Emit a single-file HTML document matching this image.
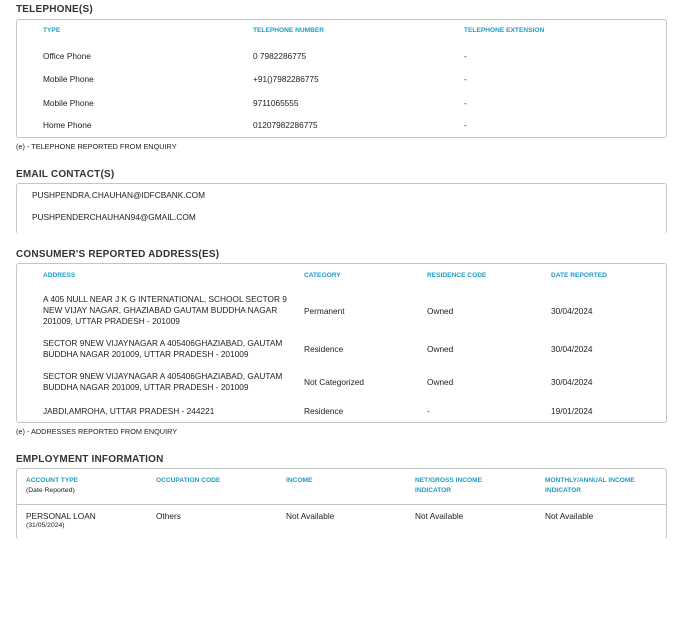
<!DOCTYPE html><html><head><style>
body{margin:0;width:687px;height:627px;background:#fff;font-family:"Liberation Sans",sans-serif;color:#222;position:relative;overflow:hidden}
div{position:absolute;white-space:nowrap}
.h{font-size:10px;font-weight:bold;color:#333;letter-spacing:.2px;left:16px}
.box{border:1px solid #c4c4c4;border-radius:3px;left:16px;width:649px}
.c{font-size:6.6px;color:#1d9cc6;font-weight:bold;line-height:10px}
.t{font-size:8.3px;line-height:11px}
.n{font-size:7.3px;left:16px}
</style></head><body>
<div class="h" style="top:4px">TELEPHONE(S)</div>
<div class="box" style="top:19px;height:117px"></div>
<div class="c" style="left:43px;top:26px">TYPE</div><div class="c" style="left:253px;top:26px">TELEPHONE NUMBER</div><div class="c" style="left:464px;top:26px">TELEPHONE EXTENSION</div>
<div class="t" style="left:43px;top:51px">Office Phone</div><div class="t" style="left:253px;top:51px">0 7982286775</div><div class="t" style="left:464px;top:51px">-</div>
<div class="t" style="left:43px;top:74px">Mobile Phone</div><div class="t" style="left:253px;top:74px">+91()7982286775</div><div class="t" style="left:464px;top:74px">-</div>
<div class="t" style="left:43px;top:98px">Mobile Phone</div><div class="t" style="left:253px;top:98px">9711065555</div><div class="t" style="left:464px;top:98px">-</div>
<div class="t" style="left:43px;top:120px">Home Phone</div><div class="t" style="left:253px;top:120px">01207982286775</div><div class="t" style="left:464px;top:120px">-</div>
<div class="n" style="top:142px">(e) - TELEPHONE REPORTED FROM ENQUIRY</div>

<div class="h" style="top:169px">EMAIL CONTACT(S)</div>
<div class="box" style="top:183px;height:50px;border-bottom:none"></div>
<div class="t" style="left:32px;top:190px">PUSHPENDRA.CHAUHAN@IDFCBANK.COM</div>
<div class="t" style="left:32px;top:212px">PUSHPENDERCHAUHAN94@GMAIL.COM</div>

<div class="h" style="top:249px">CONSUMER'S REPORTED ADDRESS(ES)</div>
<div class="box" style="top:263px;height:158px"></div>
<div class="c" style="left:43px;top:271px">ADDRESS</div><div class="c" style="left:304px;top:271px">CATEGORY</div><div class="c" style="left:427px;top:271px">RESIDENCE CODE</div><div class="c" style="left:551px;top:271px">DATE REPORTED</div>
<div class="t" style="left:43px;top:294px">A 405 NULL NEAR J K G INTERNATIONAL, SCHOOL SECTOR 9<br>NEW VIJAY NAGAR, GHAZIABAD GAUTAM BUDDHA NAGAR<br>201009, UTTAR PRADESH - 201009</div>
<div class="t" style="left:304px;top:306px">Permanent</div><div class="t" style="left:427px;top:306px">Owned</div><div class="t" style="left:551px;top:306px">30/04/2024</div>
<div class="t" style="left:43px;top:338px">SECTOR 9NEW VIJAYNAGAR A 405406GHAZIABAD, GAUTAM<br>BUDDHA NAGAR 201009, UTTAR PRADESH - 201009</div>
<div class="t" style="left:304px;top:344px">Residence</div><div class="t" style="left:427px;top:344px">Owned</div><div class="t" style="left:551px;top:344px">30/04/2024</div>
<div class="t" style="left:43px;top:371px">SECTOR 9NEW VIJAYNAGAR A 405406GHAZIABAD, GAUTAM<br>BUDDHA NAGAR 201009, UTTAR PRADESH - 201009</div>
<div class="t" style="left:304px;top:377px">Not Categorized</div><div class="t" style="left:427px;top:377px">Owned</div><div class="t" style="left:551px;top:377px">30/04/2024</div>
<div class="t" style="left:43px;top:406px">JABDI,AMROHA, UTTAR PRADESH - 244221</div>
<div class="t" style="left:304px;top:406px">Residence</div><div class="t" style="left:427px;top:406px">-</div><div class="t" style="left:551px;top:406px">19/01/2024</div>
<div class="n" style="top:427px">(e) - ADDRESSES REPORTED FROM ENQUIRY</div>

<div class="h" style="top:454px">EMPLOYMENT INFORMATION</div>
<div class="box" style="top:468px;height:70px;border-bottom:none"></div>
<div style="left:17px;top:504px;width:649px;height:1px;background:#c4c4c4"></div>
<div class="c" style="left:26px;top:476px">ACCOUNT TYPE</div><div style="left:26px;top:487px;font-size:6.8px">(Date Reported)</div>
<div class="c" style="left:156px;top:476px">OCCUPATION CODE</div><div class="c" style="left:286px;top:476px">INCOME</div>
<div class="c" style="left:415px;top:476px">NET/GROSS INCOME<br>INDICATOR</div><div class="c" style="left:545px;top:476px">MONTHLY/ANNUAL INCOME<br>INDICATOR</div>
<div class="t" style="left:26px;top:511px">PERSONAL LOAN</div><div style="left:26px;top:522px;font-size:6.8px">(31/05/2024)</div>
<div class="t" style="left:156px;top:511px">Others</div><div class="t" style="left:286px;top:511px">Not Available</div><div class="t" style="left:415px;top:511px">Not Available</div><div class="t" style="left:545px;top:511px">Not Available</div>
</body></html>
